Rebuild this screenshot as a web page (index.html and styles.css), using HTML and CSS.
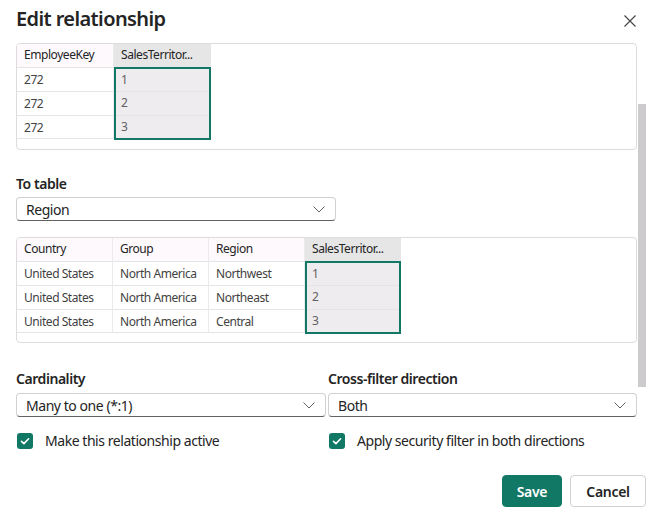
FILE: index.html
```html
<!DOCTYPE html>
<html>
<head>
<meta charset="utf-8">
<link rel="stylesheet" href="styles.css">
</head>
<body>
<div class="dialog">
  <div class="header">
    <h1 class="title">Edit relationship</h1>
    <button class="close" aria-label="Close">
      <svg width="12" height="12" viewBox="0 0 12 12"><path d="M0.5 0.5 L11.5 11.5 M11.5 0.5 L0.5 11.5" stroke="#424242" stroke-width="1.1" fill="none"/></svg>
    </button>
  </div>
  <div class="body">
    <div class="scroll-thumb"></div>
    <div class="table-box">
      <div class="grid">
        <div class="col w97">
          <div class="hd">EmployeeKey</div>
          <div class="cell">272</div>
          <div class="cell">272</div>
          <div class="cell">272</div>
        </div>
        <div class="col w97 sel">
          <div class="hd">SalesTerritor...</div>
          <div class="selbody">
            <div class="cell">1</div>
            <div class="cell">2</div>
            <div class="cell last">3</div>
          </div>
        </div>
      </div>
    </div>

    <div class="field totable">
      <div class="label">To table</div>
      <div class="dropdown narrow">
        <span>Region</span>
        <svg class="chev" width="12" height="7" viewBox="0 0 12 7"><path d="M0.5 0.5 L6 6 L11.5 0.5" stroke="#616161" stroke-width="1" fill="none"/></svg>
      </div>
    </div>

    <div class="table-box second">
      <div class="grid">
        <div class="col">
          <div class="hd">Country</div>
          <div class="cell">United States</div>
          <div class="cell">United States</div>
          <div class="cell">United States</div>
        </div>
        <div class="col">
          <div class="hd">Group</div>
          <div class="cell">North America</div>
          <div class="cell">North America</div>
          <div class="cell">North America</div>
        </div>
        <div class="col">
          <div class="hd">Region</div>
          <div class="cell">Northwest</div>
          <div class="cell">Northeast</div>
          <div class="cell">Central</div>
        </div>
        <div class="col sel">
          <div class="hd">SalesTerritor...</div>
          <div class="selbody">
            <div class="cell">1</div>
            <div class="cell">2</div>
            <div class="cell last">3</div>
          </div>
        </div>
      </div>
    </div>

    <div class="two-col">
      <div class="field">
        <div class="label">Cardinality</div>
        <div class="dropdown">
          <span>Many to one (*:1)</span>
          <svg class="chev" width="12" height="7" viewBox="0 0 12 7"><path d="M0.5 0.5 L6 6 L11.5 0.5" stroke="#616161" stroke-width="1" fill="none"/></svg>
        </div>
      </div>
      <div class="field">
        <div class="label">Cross-filter direction</div>
        <div class="dropdown">
          <span>Both</span>
          <svg class="chev" width="12" height="7" viewBox="0 0 12 7"><path d="M0.5 0.5 L6 6 L11.5 0.5" stroke="#616161" stroke-width="1" fill="none"/></svg>
        </div>
      </div>
      <label class="check">
        <span class="box"><svg width="16" height="16" viewBox="0 0 16 16"><path d="M4.5 8.3 L6.9 10.6 L11.6 5.8" stroke="#fff" stroke-width="1.6" fill="none" stroke-linecap="round" stroke-linejoin="round"/></svg></span>
        <span class="check-text">Make this relationship active</span>
      </label>
      <label class="check">
        <span class="box"><svg width="16" height="16" viewBox="0 0 16 16"><path d="M4.5 8.3 L6.9 10.6 L11.6 5.8" stroke="#fff" stroke-width="1.6" fill="none" stroke-linecap="round" stroke-linejoin="round"/></svg></span>
        <span class="check-text">Apply security filter in both directions</span>
      </label>
    </div>
  </div>
  <div class="footer">
    <button class="btn primary">Save</button>
    <button class="btn">Cancel</button>
  </div>
</div>
</body>
</html>
```

FILE: styles.css
```css
* { box-sizing: border-box; }
html, body {
  margin: 0;
  padding: 0;
  background: #ffffff;
}
body {
  font-family: "Segoe UI", "Noto Sans", "Open Sans", sans-serif;
  color: #242424;
  font-size: 14px;
  letter-spacing: -0.45px;
}
.dialog {
  width: 658px;
  height: 514px;
  position: relative;
}
.header {
  display: flex;
  justify-content: space-between;
  align-items: flex-start;
  height: 43px;
  padding: 0 22px 0 16px;
}
.title {
  margin: 0;
  font-size: 20px;
  font-weight: 600;
  line-height: 28px;
  padding-top: 5px;
  letter-spacing: -0.6px;
}
.close {
  border: none;
  background: none;
  padding: 0;
  margin-top: 15px;
  width: 12px;
  height: 12px;
  display: flex;
}
.body {
  position: relative;
  padding: 0 21px 0 16px;
}
.scroll-thumb {
  position: absolute;
  left: 638px;
  top: 61px;
  width: 8px;
  height: 283px;
  background: #cdcbcd;
}
.table-box {
  border: 1px solid #dcdcdc;
  border-radius: 4px;
  height: 107px;
  overflow: hidden;
}
.table-box.second {
  margin-top: 16px;
  height: 106px;
}
.grid {
  display: flex;
  font-size: 12px;
  line-height: 16px;
  letter-spacing: -0.45px;
}
.col {
  width: 96px;
}
.col.w97 {
  width: 97px;
}
.hd {
  height: 23px;
  padding: 3px 0 0 7px;
  background: #fdf9fd;
  border-right: 1px solid #ebebeb;
  color: #242424;
  white-space: nowrap;
}
.col.sel .hd {
  background: #e6e6e6;
  border-right: none;
}
.cell {
  height: 24px;
  padding: 4px 0 0 7px;
  border-top: 1px solid #e5e5e5;
  border-right: 1px solid #ebebeb;
  color: #424242;
  white-space: nowrap;
}
.col > .cell:last-child {
  border-bottom: 1px solid #e5e5e5;
}
.selbody {
  border: 2px solid #117865;
  background: #efecef;
}
.selbody .cell {
  border-right: none;
  color: #616161;
  padding-left: 5px;
  height: 24px;
  padding-top: 3px;
}
.selbody .cell:first-child {
  border-top: none;
  height: 22px;
}
.selbody .cell.last {
  height: 23px;
}
.field {
  display: flex;
  flex-direction: column;
}
.totable {
  margin-top: 24px;
}
.label {
  font-weight: 600;
  line-height: 20px;
  height: 20px;
  margin-bottom: 3px;
}
.two-col .label {
  margin-bottom: 4px;
}
.dropdown {
  height: 24px;
  border: 1px solid #d1d1d1;
  border-bottom-color: #616161;
  border-radius: 4px;
  display: flex;
  align-items: center;
  justify-content: space-between;
  padding: 1px 10px 0 9px;
  line-height: 20px;
  color: #242424;
}
.dropdown.narrow {
  width: 320px;
}
.chev {
  display: block;
}
.two-col {
  margin-top: 26px;
  display: grid;
  grid-template-columns: 310px 309px;
  column-gap: 2px;
}
.two-col .dropdown {
  height: 24px;
}
.check {
  display: flex;
  align-items: center;
  margin-top: 16px;
  height: 16px;
  padding-left: 1px;
}
.box {
  width: 16px;
  height: 16px;
  border-radius: 3px;
  background: #117865;
  display: flex;
}
.check-text {
  margin-left: 12px;
  line-height: 20px;
  color: #242424;
}
.footer {
  position: absolute;
  right: 12px;
  top: 475px;
  display: flex;
  gap: 8px;
}
.btn {
  height: 32px;
  border-radius: 4px;
  border: 1px solid #d1d1d1;
  background: #ffffff;
  font-family: inherit;
  font-size: 14px;
  font-weight: 600;
  letter-spacing: -0.3px;
  color: #242424;
  padding: 0 12px;
  min-width: 76px;
}
.btn.primary {
  background: #117865;
  border-color: #117865;
  color: #ffffff;
  min-width: 60px;
  width: 60px;
}
```
